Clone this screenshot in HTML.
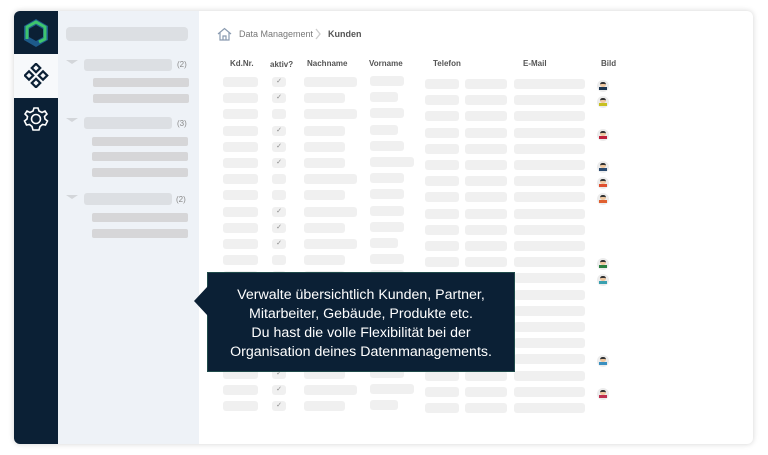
<!DOCTYPE html>
<html><head><meta charset="utf-8"><style>
*{margin:0;padding:0;box-sizing:border-box}
body{width:768px;height:455px;background:#fff;position:relative;overflow:hidden;font-family:"Liberation Sans",sans-serif}
.a{position:absolute}
.card{left:14px;top:11px;width:739px;height:433px;background:#fff;border-radius:6px;box-shadow:0 0 6px rgba(0,0,0,.18);overflow:hidden}
.b{position:absolute;background:#f0f0f0;border-radius:3px}
.g{position:absolute;background:#d6d6d8;border-radius:2px}
.h{position:absolute;font-size:8px;color:#555;font-weight:bold}
.cnt{position:absolute;font-size:8px;color:#888}
.tri{position:absolute;width:0;height:0;border-left:6px solid transparent;border-right:6px solid transparent;border-top:4px solid #d3d6da}
.av{position:absolute;width:12px;height:12px;border-radius:50%;background:#ececec}
</style></head><body>
<div class="a card">
 <div class="a" style="left:0;top:0;width:44px;height:433px;background:#0b2035"></div>
 <div class="a" style="left:0;top:43px;width:44px;height:44px;background:#f7f9fb"></div>
 <svg class="a" style="left:7px;top:6px" width="30" height="32" viewBox="0 0 30 32">
  <polygon points="15,2 27,9 27,23 15,30 3,23 3,9" fill="#1d5a8a"/>
  <polygon points="15,8 22,12 22,20 15,24 8,20 8,12" fill="#0b2035"/>
  <path d="M6,22 L6,10 L15,5 L24,10 L24,22 L18,25" fill="none" stroke="#3ec46d" stroke-width="3"/>
 </svg>
 <svg class="a" style="left:10px;top:52px" width="25" height="25" viewBox="0 0 25 25" fill="none" stroke="#0b2035" stroke-width="2.2">
  <rect x="9" y="2" width="6" height="6" transform="rotate(45 12 5)"/>
  <rect x="9" y="17" width="6" height="6" transform="rotate(45 12 20)"/>
  <rect x="2" y="9.5" width="6" height="6" transform="rotate(45 5 12.5)"/>
  <rect x="16" y="9.5" width="6" height="6" transform="rotate(45 19 12.5)"/>
 </svg>
 <svg class="a" style="left:9px;top:95px" width="26" height="26" viewBox="0 0 26 26" fill="none" stroke="#fff" stroke-width="1.6">
  <path d="M11,2 H15 L16,5 L19,6.5 L22,5 L24,8 L21.5,10.5 L22,13 L24.5,15 L22.5,19 L19.5,18.5 L17,20.5 L16,24 H10 L9,20.5 L6.5,18.5 L3.5,19 L1.5,15 L4,13 L4.5,10.5 L2,8 L4,5 L7,6.5 L10,5 Z"/>
  <circle cx="13" cy="13" r="4.5"/>
 </svg>
 <div class="a" style="left:44px;top:0;width:141px;height:433px;background:#eef2f7"></div>
</div>
<div class="g" style="left:66px;top:27px;width:122px;height:14px;background:#dcdfe3;border-radius:4px"></div>
<div class="tri" style="left:66px;top:60px"></div><div class="g" style="left:84px;top:59px;width:88px;height:12px;background:#dcdfe3;border-radius:3px"></div><div class="cnt" style="left:177px;top:60px">(2)</div>
<div class="g" style="left:93px;top:78px;width:96px;height:9px"></div>
<div class="g" style="left:93px;top:94px;width:96px;height:9px"></div>
<div class="tri" style="left:66px;top:118px"></div><div class="g" style="left:84px;top:117px;width:88px;height:12px;background:#dcdfe3;border-radius:3px"></div><div class="cnt" style="left:177px;top:119px">(3)</div>
<div class="g" style="left:92px;top:137px;width:96px;height:9px"></div>
<div class="g" style="left:92px;top:152px;width:96px;height:9px"></div>
<div class="g" style="left:92px;top:168px;width:96px;height:9px"></div>
<div class="tri" style="left:66px;top:195px"></div><div class="g" style="left:84px;top:193px;width:88px;height:12px;background:#dcdfe3;border-radius:3px"></div><div class="cnt" style="left:176px;top:195px">(2)</div>
<div class="g" style="left:92px;top:213px;width:96px;height:9px"></div>
<div class="g" style="left:92px;top:229px;width:96px;height:9px"></div>

<svg class="a" style="left:217px;top:27px" width="15" height="14" viewBox="0 0 15 14" fill="none" stroke="#8a9bb0" stroke-width="1.2"><path d="M1,7 L7.5,1.5 L14,7 M3,5.5 V13 H12 V5.5 M6,13 V9 H9 V13"/></svg>
<div class="a" style="left:239px;top:29px;font-size:9px;color:#777">Data Management</div>
<svg class="a" style="left:315px;top:28px" width="6" height="12"><path d="M1,1 L5,6 L1,11" fill="none" stroke="#ccc" stroke-width="1.3"/></svg>
<div class="a" style="left:328px;top:29px;font-size:9px;color:#555;font-weight:bold">Kunden</div>
<div class="h" style="left:230px;top:59px">Kd.Nr.</div>
<div class="h" style="left:270px;top:60px">aktiv?</div>
<div class="h" style="left:307px;top:59px">Nachname</div>
<div class="h" style="left:369px;top:59px">Vorname</div>
<div class="h" style="left:433px;top:59px">Telefon</div>
<div class="h" style="left:523px;top:59px">E-Mail</div>
<div class="h" style="left:601px;top:59px">Bild</div>
<div id="rows"></div>
<script>
var r=document.getElementById('rows'),h='';
var chk=[1,1,0,1,1,1,0,0,1,1,1,0,1,1,1,1,1,1,1,1,1];
var nw=[53,41,53,41,41,41,53,41,53,41,53,41,41,53,53,41,41,41,41,53,41];
var vw=[34,28,34,28,34,44,34,34,34,34,28,34,34,34,34,34,34,34,34,44,28];
var avs={0:'#1c3550',1:'#c8c020',3:'#c0203a',5:'#2a4a70',6:'#e05030',7:'#e06030',11:'#2a8040',12:'#3aa0b0',17:'#3a90c0',19:'#c03050'};
for(var i=0;i<21;i++){var y=77+i*16.2,y2=79+i*16.2;
h+='<div class="b" style="left:223px;top:'+y+'px;width:35px;height:10px"></div>';
h+='<div class="b" style="left:272px;top:'+y+'px;width:14px;height:10px;font-size:7px;color:#888;text-align:center;line-height:10px">'+(chk[i]?'✓':'')+'</div>';
h+='<div class="b" style="left:304px;top:'+y+'px;width:'+nw[i]+'px;height:10px"></div>';
h+='<div class="b" style="left:370px;top:'+(y-1)+'px;width:'+vw[i]+'px;height:10px"></div>';
h+='<div class="b" style="left:425px;top:'+y2+'px;width:34px;height:10px"></div>';
h+='<div class="b" style="left:465px;top:'+y2+'px;width:42px;height:10px"></div>';
h+='<div class="b" style="left:514px;top:'+y2+'px;width:71px;height:10px"></div>';
if(avs[i]!==undefined){h+='<div class="av" style="left:597px;top:'+(y2+1)+'px"><div class="a" style="left:3px;top:2px;width:6px;height:5px;border-radius:3px;background:#f0c8a0;border-top:2px solid #333"></div><div class="a" style="left:2px;top:7px;width:8px;height:3px;background:'+avs[i]+'"></div></div>';}
}
r.innerHTML=h;
</script>
<div class="a" style="left:207px;top:272px;width:308px;height:100px;background:#0b2035;border:1px solid #1f4a4a"></div>
<div class="a" style="left:194px;top:286px;width:0;height:0;border-top:15px solid transparent;border-bottom:15px solid transparent;border-right:14px solid #0b2035"></div>
<div class="a" style="left:207px;top:286px;width:308px;text-align:center;color:#fff;font-size:14.2px;line-height:19px">Verwalte übersichtlich Kunden, Partner,<br>Mitarbeiter, Gebäude, Produkte etc.<br>Du hast die volle Flexibilität bei der<br>Organisation deines Datenmanagements.</div>
</body></html>
